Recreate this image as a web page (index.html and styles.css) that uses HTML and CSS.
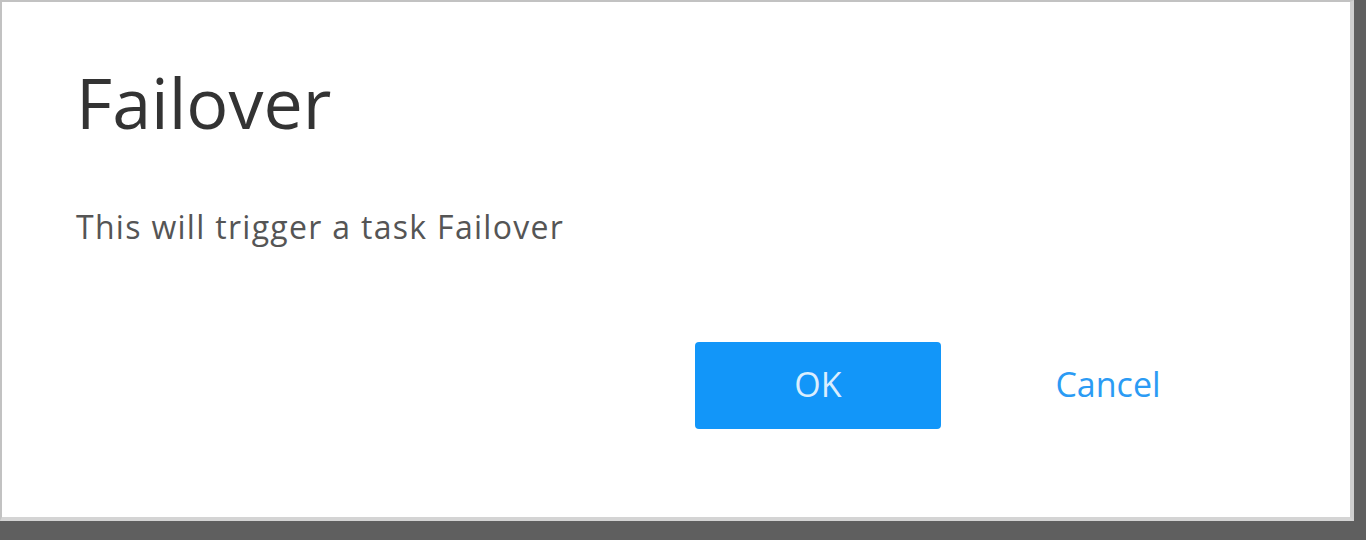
FILE: index.html
```html
<!DOCTYPE html>
<html lang="en">
<head>
<meta charset="utf-8">
<title>Failover</title>
<link rel="stylesheet" href="styles.css">
</head>
<body>
<div class="dialog">
  <h1 class="title">Failover</h1>
  <p class="message">This will trigger a task Failover</p>
  <div class="actions">
    <button class="btn btn-primary" type="button">OK</button>
    <button class="btn btn-link" type="button">Cancel</button>
  </div>
</div>
</body>
</html>
```
FILE: styles.css
```css
html, body {
  margin: 0;
  padding: 0;
  height: 100%;
}
body {
  background: #5f5f5f;
  font-family: "Open Sans", "Noto Sans", sans-serif;
  overflow: hidden;
}
.dialog {
  box-sizing: border-box;
  width: 1354px;
  height: 521px;
  background: #ffffff;
  border-top: 2px solid #c2c2c2;
  border-left: 2px solid #c2c2c2;
  border-right: 4px solid #cfcfcf;
  border-bottom: 4px solid #d4d4d4;
  padding: 60px 119px 0 74px;
  display: flex;
  flex-direction: column;
}
.title {
  margin: 0;
  font-size: 70px;
  line-height: 80px;
  font-weight: 400;
  color: #333333;
}
.message {
  margin: 65px 0 0 0;
  font-size: 32px;
  line-height: 40px;
  letter-spacing: 1.3px;
  color: #555555;
}
.actions {
  margin-top: 95px;
  display: flex;
  justify-content: flex-end;
  gap: 44px;
}
.btn {
  width: 246px;
  height: 87px;
  border: none;
  border-radius: 4px;
  font-family: "Open Sans", "Noto Sans", sans-serif;
  font-size: 34px;
  padding: 0 0 4px 0;
  cursor: pointer;
}
.btn-primary {
  background: #1296f9;
  color: rgba(255, 255, 255, 0.85);
}
.btn-link {
  background: transparent;
  color: #2b9bf4;
}
```
